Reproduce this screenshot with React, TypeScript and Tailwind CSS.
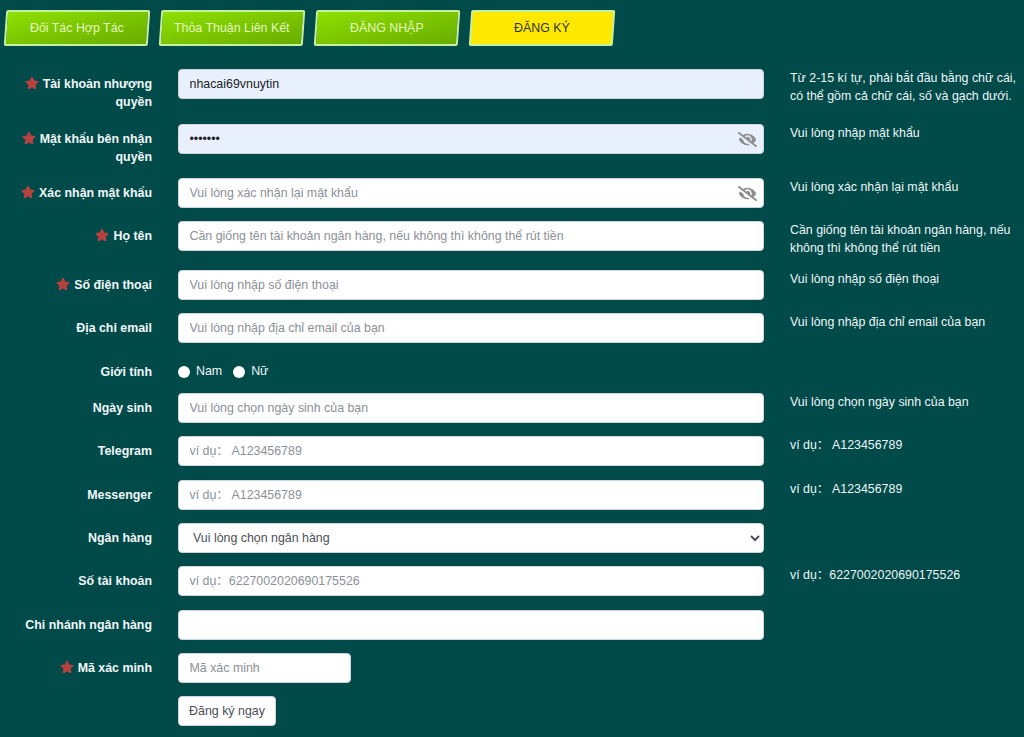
import { FaEyeSlash, FaStar } from "react-icons/fa";

const inputCls =
  "w-full h-[30px] rounded-[4px] border border-[#ced4da] bg-white px-[10.5px] text-[12.4px] text-[#495057] outline-none placeholder:text-[#8b9197]";

function Tab({ text, active }: { text: string; active?: boolean }) {
  return (
    <div
      className={
        "flex h-[36px] w-[143.5px] -skew-x-[4deg] items-center justify-center rounded-[2px] border-2 border-[#c6efa0] text-[12.4px] " +
        (active
          ? "bg-[#ffe800] text-[#333333]"
          : "bg-gradient-to-br from-[#8fe000] to-[#68ad00] text-[#e4f7c0]")
      }
    >
      <span className="skew-x-[4deg]">{text}</span>
    </div>
  );
}

function Label({ text, req }: { text: string; req?: boolean }) {
  return (
    <div className="w-[152px] shrink-0 pt-[6px] text-right text-[12.4px] font-bold leading-[18px] text-[#f2f7f7]">
      {req && <FaStar className="mr-[4px] inline-block align-[-2px] text-[14px] text-[#b5423f]" />}
      {text}
    </div>
  );
}

function Hint({ lines }: { lines?: string[] }) {
  return (
    <div className="ml-[26px] flex-1 whitespace-pre text-[12.4px] leading-[18px] text-[#eef5f5]">
      {lines?.map((l) => <div key={l}>{l}</div>)}
    </div>
  );
}

function Row({
  label,
  req,
  hint,
  h,
  children,
}: {
  label: string;
  req?: boolean;
  hint?: string[];
  h: string;
  children: React.ReactNode;
}) {
  return (
    <div className={"flex " + h}>
      <Label text={label} req={req} />
      <div className="relative ml-[26px] w-[586px] shrink-0">{children}</div>
      <Hint lines={hint} />
    </div>
  );
}

function EyeIcon() {
  return <FaEyeSlash className="absolute right-[7px] top-[6px] text-[19px] text-[#8f8f8f]" />;
}

export default function App() {
  return (
    <div className="h-[737px] w-[1024px] overflow-hidden bg-[#004a4a] font-['Liberation_Sans','Noto_Sans_CJK_SC',Arial,sans-serif]">
      <div className="flex gap-[11.83px] pl-[4.5px] pt-[10px]">
        <Tab text="Đối Tác Hợp Tác" />
        <Tab text="Thỏa Thuận Liên Kết" />
        <Tab text="ĐĂNG NHẬP" />
        <Tab text="ĐĂNG KÝ" active />
      </div>
      <div className="mt-[23px] flex flex-col">
        <Row h="h-[54.67px]" label="Tài khoản nhượng quyền" req hint={["Từ 2-15 kí tự, phải bắt đầu bằng chữ cái,", "có thể gồm cả chữ cái, số và gạch dưới."]}>
          <input className={inputCls + " !bg-[#e8f0fe] !text-[#222222]"} readOnly value="nhacai69vnuytin" />
        </Row>
        <Row h="h-[54.33px]" label="Mật khẩu bên nhận quyền" req hint={["Vui lòng nhập mật khẩu"]}>
          <input type="password" className={inputCls + " !bg-[#e8f0fe] !text-[#222222]"} readOnly value="1234567" />
          <EyeIcon />
        </Row>
        <Row h="h-[43.5px]" label="Xác nhận mật khẩu" req hint={["Vui lòng xác nhận lại mật khẩu"]}>
          <input className={inputCls} placeholder="Vui lòng xác nhận lại mật khẩu" />
          <EyeIcon />
        </Row>
        <Row h="h-[48.5px]" label="Họ tên" req hint={["Cần giống tên tài khoản ngân hàng, nếu", "không thì không thể rút tiền"]}>
          <input className={inputCls} placeholder="Cần giống tên tài khoản ngân hàng, nếu không thì không thể rút tiền" />
        </Row>
        <Row h="h-[43.33px]" label="Số điện thoại" req hint={["Vui lòng nhập số điện thoại"]}>
          <input className={inputCls} placeholder="Vui lòng nhập số điện thoại" />
        </Row>
        <Row h="h-[43.33px]" label="Địa chỉ email" hint={["Vui lòng nhập địa chỉ email của bạn"]}>
          <input className={inputCls} placeholder="Vui lòng nhập địa chỉ email của bạn" />
        </Row>
        <Row h="h-[36.33px]" label="Giới tính">
          <div className="flex h-[30px] items-center text-[12.4px] text-[#eef5f5]">
            <span className="h-[12px] w-[12px] rounded-full bg-white" />
            <span className="ml-[6px]">Nam</span>
            <span className="ml-[11px] h-[12px] w-[12px] rounded-full bg-white" />
            <span className="ml-[6px]">Nữ</span>
          </div>
        </Row>
        <Row h="h-[43.33px]" label="Ngày sinh" hint={["Vui lòng chọn ngày sinh của bạn"]}>
          <input className={inputCls} placeholder="Vui lòng chọn ngày sinh của bạn" />
        </Row>
        <Row h="h-[43.33px]" label="Telegram" hint={["ví dụ： A123456789"]}>
          <input className={inputCls} placeholder="ví dụ： A123456789" />
        </Row>
        <Row h="h-[43.33px]" label="Messenger" hint={["ví dụ： A123456789"]}>
          <input className={inputCls} placeholder="ví dụ： A123456789" />
        </Row>
        <Row h="h-[43.33px]" label="Ngân hàng">
          <select className={inputCls + " !px-[10px]"} defaultValue="">
            <option value="">Vui lòng chọn ngân hàng</option>
          </select>
        </Row>
        <Row h="h-[43.33px]" label="Số tài khoản" hint={["ví dụ：6227002020690175526"]}>
          <input className={inputCls} placeholder="ví dụ：6227002020690175526" />
        </Row>
        <Row h="h-[43.33px]" label="Chi nhánh ngân hàng">
          <input className={inputCls} />
        </Row>
        <Row h="h-[43.33px]" label="Mã xác minh" req>
          <input className={inputCls + " !w-[173px]"} placeholder="Mã xác minh" />
        </Row>
        <div className="ml-[178px] flex">
          <button className="h-[30px] w-[98px] rounded-[4px] border border-[#ced4da] bg-white text-[12.4px] text-[#495057]">
            Đăng ký ngay
          </button>
        </div>
      </div>
    </div>
  );
}
